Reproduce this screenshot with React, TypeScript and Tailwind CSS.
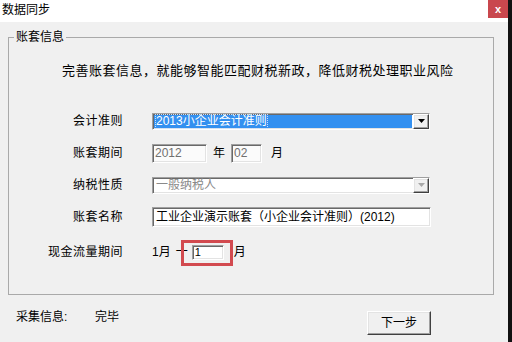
import type { ReactNode } from 'react';

const sunken =
  'border border-t-[#a0a0a0] border-l-[#a0a0a0] border-b-white border-r-white shadow-[inset_1px_1px_0_#696969,inset_-1px_-1px_0_#e3e3e3]';
const raised =
  'border border-t-white border-l-white border-b-[#404040] border-r-[#404040] shadow-[inset_-1px_-1px_0_#a0a0a0,inset_1px_1px_0_#e3e3e3] bg-[#f0f0f0]';

function ArrowButton({ disabled }: { disabled?: boolean }) {
  return (
    <div className={`w-[16px] h-full flex items-center justify-center ${raised}`}>
      <svg width="7" height="4" viewBox="0 0 7 4">
        <polygon points="0,0 7,0 3.5,4" fill={disabled ? '#a8a8a8' : '#000'} />
      </svg>
    </div>
  );
}

function Row({ label, h = 'h-[32px]', children }: { label: string; h?: string; children: ReactNode }) {
  return (
    <div className={`flex items-center ${h}`}>
      <div className="w-[114px] text-right text-[12px] leading-[16px] tracking-[0.5px] text-black">{label}</div>
      <div className="ml-[29px] flex items-center">{children}</div>
    </div>
  );
}

export default function App() {
  return (
    <div className="w-[512px] h-[342px] flex bg-[#f0f0f0] overflow-hidden font-['Liberation_Sans','Noto_Sans_CJK_SC',sans-serif] text-black">
      <div className="flex-1 flex flex-col">
        {/* title bar */}
        <div className="h-[22px] bg-white flex items-start justify-between">
          <span className="pl-[2px] pt-[2px] text-[12px] leading-[16px]">数据同步</span>
          <div className="w-[20px] h-[18px] bg-[#c9474d] text-white flex items-center justify-center text-[11px] font-bold leading-none">
            x
          </div>
        </div>

        {/* group box */}
        <div className="relative mt-[15px] ml-[8px] mr-[14px] h-[258px] border border-[#a9a9a9]">
          <span className="absolute left-[5px] top-[-9px] px-[2px] bg-[#f0f0f0] text-[12px] leading-[16px]">账套信息</span>

          <div className="pt-[24px] pl-[53px] text-[13px] tracking-[0.5px] leading-[18px] whitespace-nowrap">
            完善账套信息，就能够智能匹配财税新政，降低财税处理职业风险
          </div>

          <div className="mt-[25px] flex flex-col">
            <Row label="会计准则">
              <div className={`w-[278px] h-[17px] flex bg-white ${sunken}`}>
                <div className="flex-1 m-[1px] bg-[#3390f0] flex items-center pl-[2px]">
                  <span className="text-[12px] leading-[13px] text-white outline-1 outline-dotted outline-[#c8e0ff]">
                    2013小企业会计准则
                  </span>
                </div>
                <ArrowButton />
              </div>
            </Row>

            <Row label="账套期间">
              <div className={`w-[55px] h-[19px] bg-[#fbfbfb] flex items-center pl-[2px] text-[12px] text-[#707070] ${sunken}`}>
                2012
              </div>
              <span className="ml-[6px] text-[12px]">年</span>
              <div className={`ml-[6px] w-[31px] h-[19px] bg-[#fbfbfb] flex items-center pl-[2px] text-[12px] text-[#707070] ${sunken}`}>
                02
              </div>
              <span className="ml-[9px] text-[12px]">月</span>
            </Row>

            <Row label="纳税性质">
              <div className={`w-[278px] h-[17px] flex bg-white ${sunken}`}>
                <div className="flex-1 flex items-center pl-[3px] text-[12px] text-[#8a8a8a]">一般纳税人</div>
                <ArrowButton disabled />
              </div>
            </Row>

            <Row label="账套名称">
              <div className={`w-[279px] h-[20px] bg-white flex items-center pl-[3px] text-[12px] whitespace-nowrap ${sunken}`}>
                工业企业演示账套（小企业会计准则）(2012)
              </div>
            </Row>

            <Row label="现金流量期间" h="h-[38px]">
              <span className="text-[12px]">1月</span>
              <span className="ml-[5px] text-[12px]">一</span>
              <div className="relative ml-[4px]">
                <div className={`w-[32px] h-[15px] bg-white flex items-center pl-[2px] text-[11px] ${sunken}`}>1</div>
                <div className="absolute left-[-11px] top-[-5px] w-[52px] h-[26px] border-[3px] border-[#d24a4f]" />
              </div>
              <span className="ml-[10px] text-[12px]">月</span>
            </Row>
          </div>
        </div>

        {/* footer */}
        <div className="flex items-start pt-[14px] pl-[16px]">
          <span className="w-[79px] text-[12px] leading-[16px]">采集信息:</span>
          <span className="text-[12px] leading-[16px]">完毕</span>
          <button className={`ml-auto mr-[77px] mt-[2px] w-[64px] h-[24px] text-[12px] ${raised}`}>下一步</button>
        </div>
      </div>
      <div className="w-[4px] bg-[#111]" />
    </div>
  );
}
